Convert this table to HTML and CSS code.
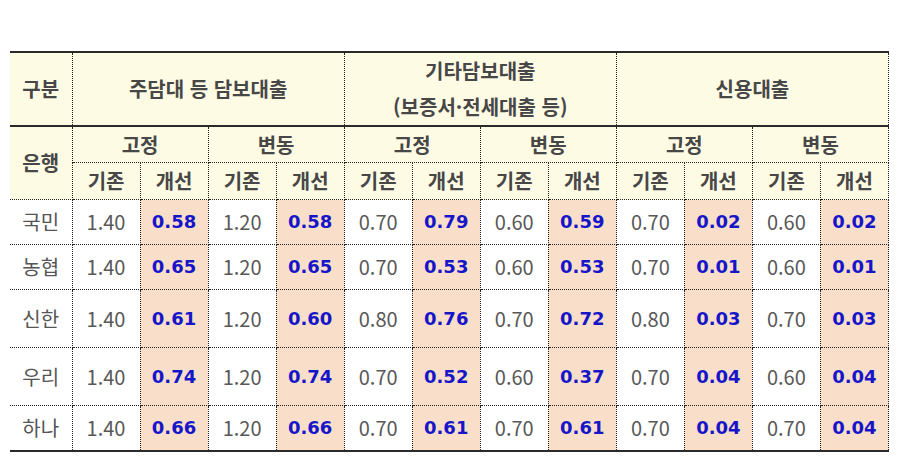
FILE: index.html
```html
<!DOCTYPE html>
<html lang="ko">
<head>
<meta charset="utf-8">
<link rel="stylesheet" href="styles.css">
</head>
<body>
<div class="wrap">
<table class="rates">
  <colgroup>
    <col class="c-first">
    <col span="12" class="c-num">
  </colgroup>
  <thead>
    <tr class="h1">
      <th>구분</th>
      <th colspan="4">주담대 등 담보대출</th>
      <th colspan="4" class="two">기타담보대출<br>(보증서·전세대출 등)</th>
      <th colspan="4">신용대출</th>
    </tr>
    <tr class="h2">
      <th rowspan="2">은행</th>
      <th colspan="2">고정</th><th colspan="2">변동</th>
      <th colspan="2">고정</th><th colspan="2">변동</th>
      <th colspan="2">고정</th><th colspan="2">변동</th>
    </tr>
    <tr class="h3">
      <th>기존</th><th>개선</th><th>기존</th><th>개선</th>
      <th>기존</th><th>개선</th><th>기존</th><th>개선</th>
      <th>기존</th><th>개선</th><th>기존</th><th>개선</th>
    </tr>
  </thead>
  <tbody>
    <tr class="r-s">
      <td class="bank">국민</td>
      <td class="old">1.40</td><td class="new">0.58</td><td class="old">1.20</td><td class="new">0.58</td>
      <td class="old">0.70</td><td class="new">0.79</td><td class="old">0.60</td><td class="new">0.59</td>
      <td class="old">0.70</td><td class="new">0.02</td><td class="old">0.60</td><td class="new">0.02</td>
    </tr>
    <tr class="r-s">
      <td class="bank">농협</td>
      <td class="old">1.40</td><td class="new">0.65</td><td class="old">1.20</td><td class="new">0.65</td>
      <td class="old">0.70</td><td class="new">0.53</td><td class="old">0.60</td><td class="new">0.53</td>
      <td class="old">0.70</td><td class="new">0.01</td><td class="old">0.60</td><td class="new">0.01</td>
    </tr>
    <tr class="r-l">
      <td class="bank">신한</td>
      <td class="old">1.40</td><td class="new">0.61</td><td class="old">1.20</td><td class="new">0.60</td>
      <td class="old">0.80</td><td class="new">0.76</td><td class="old">0.70</td><td class="new">0.72</td>
      <td class="old">0.80</td><td class="new">0.03</td><td class="old">0.70</td><td class="new">0.03</td>
    </tr>
    <tr class="r-l">
      <td class="bank">우리</td>
      <td class="old">1.40</td><td class="new">0.74</td><td class="old">1.20</td><td class="new">0.74</td>
      <td class="old">0.70</td><td class="new">0.52</td><td class="old">0.60</td><td class="new">0.37</td>
      <td class="old">0.70</td><td class="new">0.04</td><td class="old">0.60</td><td class="new">0.04</td>
    </tr>
    <tr class="r-s last">
      <td class="bank">하나</td>
      <td class="old">1.40</td><td class="new">0.66</td><td class="old">1.20</td><td class="new">0.66</td>
      <td class="old">0.70</td><td class="new">0.61</td><td class="old">0.70</td><td class="new">0.61</td>
      <td class="old">0.70</td><td class="new">0.04</td><td class="old">0.70</td><td class="new">0.04</td>
    </tr>
  </tbody>
</table>
</div>
</body>
</html>
```
FILE: styles.css
```css
html, body {
  margin: 0;
  padding: 0;
  background: #ffffff;
}

.wrap {
  padding: 51px 0 0 10px;
}

.rates {
  border-collapse: collapse;
  table-layout: fixed;
  width: 879px;
  font-family: "Noto Sans CJK KR", "Noto Sans", sans-serif;
}

.c-first { width: 62px; }
.c-num { width: 68px; }

.rates th,
.rates td {
  padding: 0;
  text-align: center;
  vertical-align: middle;
  border: 1px dotted #222;
  line-height: 1.2;
}

.rates th:first-child,
.rates td:first-child {
  border-left: none;
}

.rates th {
  background: #fefbe5;
  color: #474747;
  font-weight: 700;
  font-size: 20px;
}

.rates tr.h1 th {
  border-top: 2px solid #2a2a2a;
  border-bottom: 2px solid #2a2a2a;
  height: 70px;
  line-height: 36px;
}

.rates tr.h2 th { height: 35px; }
.rates tr.h3 th { height: 36px; }

.rates td {
  background: #ffffff;
}

.rates tr.r-s td { height: 44px; }
.rates tr.r-l td { height: 57px; }
.rates tr.last td {
  border-bottom: 2px solid #2a2a2a;
}

.bank {
  color: #555555;
  font-size: 20px;
  font-weight: 400;
}

.old {
  color: #585858;
  font-size: 20px;
  font-weight: 400;
}

.rates td.new {
  background: #f9dfca;
  color: #1616c8;
  font-family: "DejaVu Sans", "Noto Sans", sans-serif;
  font-weight: 700;
  font-size: 18px;
}
```
